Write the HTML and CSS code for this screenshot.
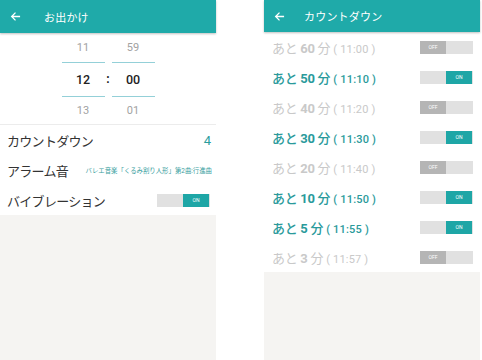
FILE: index.html
```html
<!DOCTYPE html>
<html lang="ja">
<head>
<meta charset="utf-8">
<link rel="stylesheet" href="styles.css">
</head>
<body>
<div class="screens">
  <section class="phone">
    <header class="bar">
      <svg class="back" viewBox="0 0 12 12" width="11" height="11"><path d="M11 6H2M6 1.8L1.8 6 6 10.2" fill="none" stroke="#fff" stroke-width="1.4"/></svg>
      <span class="title">お出かけ</span>
    </header>
    <div class="picker">
      <div class="col">
        <div class="cell top">11</div>
        <div class="cell mid">12</div>
        <div class="cell bot">13</div>
      </div>
      <div class="colon">:</div>
      <div class="col">
        <div class="cell top">59</div>
        <div class="cell mid">00</div>
        <div class="cell bot">01</div>
      </div>
    </div>
    <div class="settings">
      <div class="srow"><span class="slabel">カウントダウン</span><span class="count">4</span></div>
      <div class="srow"><span class="slabel">アラーム音</span><span class="alarm">バレエ音楽「くるみ割り人形」第2曲:行進曲</span></div>
      <div class="srow"><span class="slabel">バイブレーション</span><span class="toggle on"><span class="knob"></span><span class="knob">ON</span></span></div>
    </div>
    <div class="filler"></div>
  </section>
  <section class="phone right">
    <header class="bar">
      <svg class="back" viewBox="0 0 12 12" width="11" height="11"><path d="M11 6H2M6 1.8L1.8 6 6 10.2" fill="none" stroke="#fff" stroke-width="1.4"/></svg>
      <span class="title">カウントダウン</span>
    </header>
    <div class="list">
      <div class="crow off"><span class="clabel">あと <b>60</b> 分<span class="time">( 11:00 )</span></span><span class="toggle"><span class="knob">OFF</span><span class="knob"></span></span></div>
      <div class="crow"><span class="clabel">あと <b>50</b> 分<span class="time">( 11:10 )</span></span><span class="toggle on"><span class="knob"></span><span class="knob">ON</span></span></div>
      <div class="crow off"><span class="clabel">あと <b>40</b> 分<span class="time">( 11:20 )</span></span><span class="toggle"><span class="knob">OFF</span><span class="knob"></span></span></div>
      <div class="crow"><span class="clabel">あと <b>30</b> 分<span class="time">( 11:30 )</span></span><span class="toggle on"><span class="knob"></span><span class="knob">ON</span></span></div>
      <div class="crow off"><span class="clabel">あと <b>20</b> 分<span class="time">( 11:40 )</span></span><span class="toggle"><span class="knob">OFF</span><span class="knob"></span></span></div>
      <div class="crow"><span class="clabel">あと <b>10</b> 分<span class="time">( 11:50 )</span></span><span class="toggle on"><span class="knob"></span><span class="knob">ON</span></span></div>
      <div class="crow"><span class="clabel">あと <b>5</b> 分<span class="time">( 11:55 )</span></span><span class="toggle on"><span class="knob"></span><span class="knob">ON</span></span></div>
      <div class="crow off"><span class="clabel">あと <b>3</b> 分<span class="time">( 11:57 )</span></span><span class="toggle"><span class="knob">OFF</span><span class="knob"></span></span></div>
    </div>
    <div class="filler"></div>
  </section>
</div>
</body>
</html>
```
FILE: styles.css
```css
html, body {
  margin: 0;
  padding: 0;
  background: #fff;
}
body {
  font-family: Roboto, "Noto Sans CJK JP", sans-serif;
  width: 482px;
  height: 360px;
  overflow: hidden;
}
.screens {
  display: flex;
  gap: 48px;
  height: 360px;
}
.phone {
  width: 216px;
  display: flex;
  flex-direction: column;
  background: #fff;
}
.bar {
  height: 32px;
  background: #1faaa9;
  display: flex;
  align-items: center;
  color: #fff;
  box-shadow: 0 1px 2px rgba(0,0,0,0.25);
  position: relative;
  z-index: 1;
}
.phone:first-child .bar { height: 33px; }
.back {
  margin-left: 10px;
  width: 11px;
  height: 11px;
}
.title {
  margin-left: 23px;
  font-size: 11px;
  letter-spacing: 0.2px;
}
.right .title { margin-left: 19px; }

.picker {
  display: flex;
  justify-content: center;
  border-bottom: 1px solid #ececec;
}
.col {
  width: 43px;
  display: flex;
  flex-direction: column;
}
.cell {
  display: flex;
  align-items: center;
  justify-content: center;
  font-size: 11px;
  color: #a2a2a2;
}
.cell.top {
  height: 29px;
  border-bottom: 1.5px solid #94d0d8;
}
.cell.mid {
  height: 33px;
  font-size: 12.5px;
  font-weight: 500;
  color: #222;
  border-bottom: 1.5px solid #94d0d8;
}
.cell.bot { height: 27px; }
.colon {
  width: 7px;
  display: flex;
  align-items: center;
  justify-content: center;
  font-size: 12px;
  color: #222;
  font-weight: bold;
}

.srow {
  height: 30px;
  display: flex;
  align-items: center;
  justify-content: space-between;
  padding: 0 6px 0 7px;
}
.slabel {
  font-size: 13px;
  letter-spacing: -0.7px;
  color: #333;
}
.count {
  font-size: 13px;
  color: #2a9d9d;
  margin-right: -1px;
}
.alarm {
  font-size: 6.4px;
  color: #3aa0a0;
  margin-right: -2px;
}
.toggle {
  width: 53px;
  height: 13px;
  display: flex;
  background: #e1e1e1;
}
.knob {
  width: 26px;
  height: 13px;
  display: flex;
  align-items: center;
  justify-content: center;
  font-size: 5px;
  color: #fff;
  font-family: Roboto, sans-serif;
}
.toggle .knob:first-child { background: #b5b5b5; }
.toggle .knob:first-child:empty { background: transparent; }
.toggle.on .knob:last-child { background: #1ea6a6; }
.filler {
  flex: 1;
  background: #f5f4f2;
}

.list { display: flex; flex-direction: column; }
.crow {
  height: 30px;
  display: flex;
  align-items: center;
  justify-content: space-between;
  padding: 0 7px 0 8px;
}
.clabel {
  font-size: 13px;
  font-weight: 500;
  color: #2a9a9b;
  letter-spacing: -0.3px;
}
.clabel b { font-weight: bold; }
.time {
  font-size: 11px;
  font-weight: 500;
  letter-spacing: 0.2px;
  margin-left: 3px;
}
.crow.off .clabel { color: #c9c9c9; font-weight: 400; }
.crow.off .time { font-weight: 400; }
```
